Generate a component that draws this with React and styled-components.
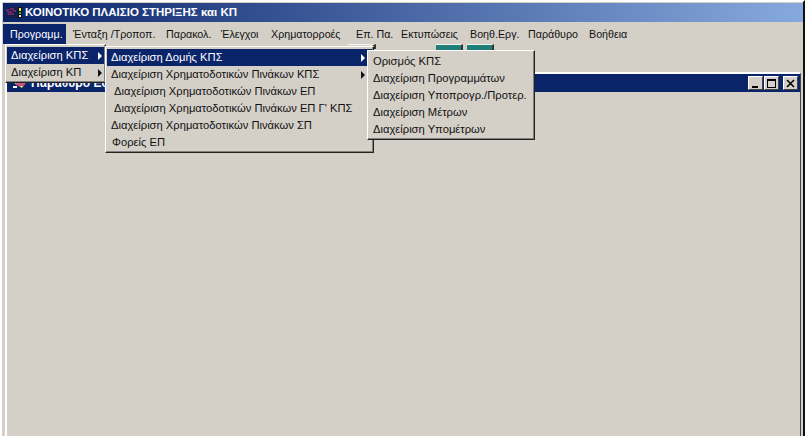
import styled, { createGlobalStyle } from 'styled-components';

const GlobalStyle = createGlobalStyle`
  html, body {
    margin: 0;
    padding: 0;
    background: #d4d0c8;
  }
  * {
    box-sizing: border-box;
  }
`;

const AppWindow = styled.div`
  position: relative;
  width: 805px;
  height: 436px;
  overflow: hidden;
  display: flex;
  flex-direction: column;
  padding: 3px 2px 0 3px;
  background: #d4d0c8;
  border-top: 2px solid #fff;
  border-left: 2px solid #fff;
  border-right: 2px solid #111;
  font-family: 'Liberation Sans', Arial, sans-serif;
  font-size: 11.2px;
  color: #111;
`;

const TitleBar = styled.div`
  height: 19px;
  flex: none;
  display: flex;
  align-items: center;
  gap: 3px;
  margin: -2px -2px 0 -2px;
  padding: 0 0 1px 3px;
  background: linear-gradient(90deg, #0a246a 0%, #86a9dd 100%);
  color: #fff;
  font-weight: bold;
  font-size: 11.5px;
`;

const MenuBar = styled.div`
  height: 21px;
  flex: none;
  display: flex;
  align-items: center;
  margin: 1px 0 0 -2px;
  font-size: 10.7px;
`;

const MenuTitle = styled.div`
  width: ${p => p.$width}px;
  height: 20px;
  line-height: 20px;
  padding-left: 7px;
  white-space: nowrap;
  background: ${p => (p.$active ? '#0a246a' : 'transparent')};
  color: ${p => (p.$active ? '#fff' : '#111')};
`;

const ToolBar = styled.div`
  height: 28px;
  flex: none;
  display: flex;
  margin-left: 343px;
`;

const ToolSeparator = styled.div`
  width: 28px;
  height: 5px;
  margin-right: 60px;
  border-top: 1px solid #f4f2ee;
  border-right: 3px solid #333;
`;

const ToolButton = styled.div`
  width: 27px;
  height: 6px;
  margin-right: 4px;
  background: #1f7f78;
  border-top: 1px solid #f4f2ee;
  border-right: 2px solid #333;
`;

const ChildWindow = styled.div`
  flex: 1;
  border-top: 2px solid #fff;
  border-left: 2px solid #fff;
  border-right: 1px solid #444;
`;

const ChildTitle = styled.div`
  height: 18px;
  display: flex;
  align-items: center;
  background: #0a246a;
  color: #fff;
  font-weight: bold;
  font-size: 12px;
  padding: 0 2px 0 6px;
  gap: 3px;
`;

const ChildCaption = styled.span`
  flex: 1;
  white-space: nowrap;
`;

const ChildButtons = styled.div`
  display: flex;
  gap: 1px;
`;

const CaptionButton = styled.div`
  width: 15px;
  height: 14px;
  margin-left: ${p => p.$gap || 0}px;
  display: flex;
  align-items: center;
  justify-content: center;
  background: #d4d0c8;
  border-top: 1px solid #fff;
  border-left: 1px solid #fff;
  border-right: 1px solid #404040;
  border-bottom: 1px solid #404040;
`;

const Menu = styled.div`
  position: absolute;
  left: ${p => p.$left}px;
  top: ${p => p.$top}px;
  width: ${p => p.$width}px;
  padding: 2px 1px 1px 1px;
  background: #d4d0c8;
  border-top: 1px solid #fff;
  border-left: 1px solid #fff;
  border-right: 1px solid #222;
  border-bottom: 1px solid #222;
  box-shadow: inset -1px -1px 0 #808080;
  z-index: ${p => p.$layer};
`;

const MenuRow = styled.div`
  position: relative;
  height: 17px;
  line-height: 17px;
  padding-left: ${p => 4 + (p.$indent || 0)}px;
  white-space: nowrap;
  background: ${p => (p.$active ? '#0a246a' : 'transparent')};
  color: ${p => (p.$active ? '#fff' : '#111')};
`;

const Arrow = styled.span`
  position: absolute;
  right: ${p => p.$right || 2}px;
  top: 5px;
  width: 0;
  height: 0;
  border-top: 4px solid transparent;
  border-bottom: 4px solid transparent;
  border-left: 4px solid ${p => (p.$active ? '#fff' : '#111')};
`;

const AppIcon = () => (
  <svg width="16" height="11" viewBox="0 0 16 11">
    <rect width="12" height="11" fill="#14204e" />
    <path d="M0 3h3M4 2h4M1 5h5M7 4h3M2 7h6" stroke="#c03078" strokeWidth="1" />
    <rect x="12" y="0" width="4" height="11" fill="#111" />
    <rect x="13" y="1" width="2" height="3" fill="#f0e840" />
    <rect x="13" y="5" width="2" height="2" fill="#30c040" />
    <rect x="13" y="8" width="2" height="2" fill="#f0f0f0" />
  </svg>
);

const ChildIcon = () => (
  <svg width="15" height="12" viewBox="0 0 15 12">
    <path d="M1 6 7 1l7 3-5 7z" fill="#e8e040" />
    <path d="M3 6h9M4 8h7" stroke="#c0209a" strokeWidth="1.4" />
    <path d="M7 1l2 3" stroke="#111" strokeWidth="1" />
    <rect x="0" y="9" width="4" height="2" fill="#fff" />
  </svg>
);

// fixed slot widths, the labels sit at these offsets in the menu bar
const menuTitles = [
  { label: 'Προγραμμ.', width: 63 },
  { label: 'Ένταξη /Τροποπ.', width: 93 },
  { label: 'Παρακολ.', width: 55 },
  { label: 'Έλεγχοι', width: 50 },
  { label: 'Χρηματορροές', width: 85 },
  { label: 'Επ. Πα.', width: 45 },
  { label: 'Εκτυπώσεις', width: 69 },
  { label: 'Βοηθ.Εργ.', width: 58 },
  { label: 'Παράθυρο', width: 61 },
  { label: 'Βοήθεια', width: 50 },
];

const structureRows = [
  { label: 'Διαχείριση Δομής ΚΠΣ', active: true, arrow: true },
  { label: 'Διαχείριση Χρηματοδοτικών Πινάκων ΚΠΣ', arrow: true },
  { label: 'Διαχείριση Χρηματοδοτικών Πινάκων ΕΠ', indent: 3 },
  { label: 'Διαχείριση Χρηματοδοτικών Πινάκων ΕΠ Γ\' ΚΠΣ', indent: 3 },
  { label: 'Διαχείριση Χρηματοδοτικών Πινάκων ΣΠ' },
  { label: 'Φορείς ΕΠ', indent: 1 },
];

const subRows = [
  'Ορισμός ΚΠΣ',
  'Διαχείριση Προγραμμάτων',
  'Διαχείριση Υποπρογρ./Προτερ.',
  'Διαχείριση Μέτρων',
  'Διαχείριση Υπομέτρων',
];

export default function App() {
  return (
    <>
      <GlobalStyle />
      <AppWindow>
        <TitleBar>
          <AppIcon />
          <span>ΚΟΙΝΟΤΙΚΟ ΠΛΑΙΣΙΟ ΣΤΗΡΙΞΗΣ και ΚΠ</span>
        </TitleBar>
        <MenuBar>
          {menuTitles.map((title, i) => (
            <MenuTitle key={title.label} $width={title.width} $active={i === 0}>{title.label}</MenuTitle>
          ))}
        </MenuBar>
        <ToolBar>
          <ToolSeparator />
          <ToolButton />
          <ToolButton />
        </ToolBar>
        <ChildWindow>
          <ChildTitle>
            <ChildIcon />
            <ChildCaption>Παράθυρο Εφαρμογής</ChildCaption>
            <ChildButtons>
              <CaptionButton>
                <svg width="9" height="9" viewBox="0 0 9 9"><rect x="1" y="7" width="6" height="2" fill="#000" /></svg>
              </CaptionButton>
              <CaptionButton>
                <svg width="9" height="9" viewBox="0 0 9 9"><path d="M0 0h9v9H0zM1 2v6h7V2z" fill="#000" fillRule="evenodd" /></svg>
              </CaptionButton>
              <CaptionButton $gap={3}>
                <svg width="9" height="9" viewBox="0 0 9 9"><path d="M1 1l7 7M8 1 1 8" stroke="#000" strokeWidth="1.6" /></svg>
              </CaptionButton>
            </ChildButtons>
          </ChildTitle>
        </ChildWindow>
        <Menu $left={3} $top={42} $width={101} $layer={1}>
          <MenuRow $active>Διαχείριση ΚΠΣ<Arrow $active /></MenuRow>
          <MenuRow>Διαχείριση ΚΠ<Arrow /></MenuRow>
        </Menu>
        <Menu $left={103} $top={44} $width={269} $layer={2}>
          {structureRows.map(row => (
            <MenuRow key={row.label} $active={row.active} $indent={row.indent}>
              {row.label}
              {row.arrow && <Arrow $active={row.active} $right={7} />}
            </MenuRow>
          ))}
        </Menu>
        <Menu $left={365} $top={48} $width={168} $layer={3}>
          {subRows.map(label => (
            <MenuRow key={label}>{label}</MenuRow>
          ))}
        </Menu>
      </AppWindow>
    </>
  );
}
